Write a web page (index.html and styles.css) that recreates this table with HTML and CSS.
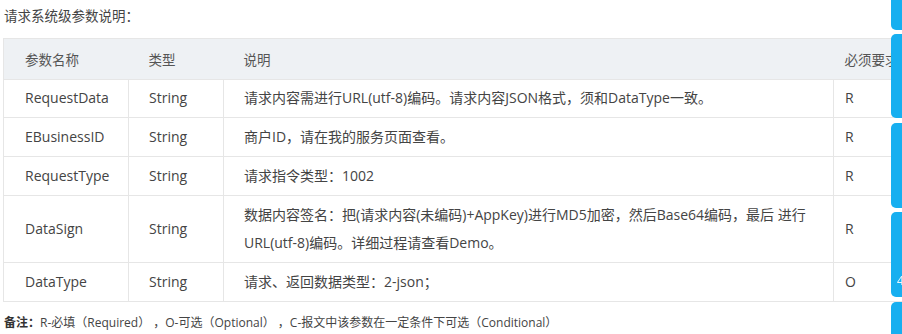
FILE: index.html
```html
<!DOCTYPE html>
<html lang="zh-CN">
<head>
<meta charset="utf-8">
<title>请求系统级参数说明</title>
<link rel="stylesheet" href="styles.css">
</head>
<body>
<div class="page">
  <p class="title">请求系统级参数说明：</p>
  <table class="params">
    <colgroup>
      <col class="c1"><col class="c2"><col class="c3"><col class="c4">
    </colgroup>
    <thead>
      <tr><th>参数名称</th><th>类型</th><th>说明</th><th>必须要求</th></tr>
    </thead>
    <tbody>
      <tr><td>RequestData</td><td>String</td><td>请求内容需进行URL(utf-8)编码。请求内容JSON格式，须和DataType一致。</td><td>R</td></tr>
      <tr><td>EBusinessID</td><td>String</td><td>商户ID，请在我的服务页面查看。</td><td>R</td></tr>
      <tr><td>RequestType</td><td>String</td><td>请求指令类型：1002</td><td>R</td></tr>
      <tr><td>DataSign</td><td>String</td><td>数据内容签名：把(请求内容(未编码)+AppKey)进行MD5加密，然后Base64编码，最后 进行URL(utf-8)编码。详细过程请查看Demo。</td><td>R</td></tr>
      <tr><td>DataType</td><td>String</td><td>请求、返回数据类型：2-json；</td><td>O</td></tr>
    </tbody>
  </table>
  <p class="note"><b>备注：</b>R-必填（Required）&nbsp;，O-可选（Optional）&nbsp;，C-报文中该参数在一定条件下可选（Conditional）</p>
</div>
<div class="sidebar">
  <span class="tab t1"></span>
  <span class="tab t2"></span>
  <span class="tab t3"></span>
  <span class="tab t4">4</span>
  <span class="tab t5"></span>
</div>
</body>
</html>
```
FILE: styles.css
```css
html, body {
  margin: 0;
  padding: 0;
  overflow: hidden;
  background: #fff;
}
body {
  font-family: "Open Sans", "Noto Sans CJK SC", sans-serif;
  color: #333;
}
.page {
  padding: 0 0 0 3px;
  width: 960px;
}
.title {
  margin: 6px 0 12px 1px;
  font-size: 13.5px;
  line-height: 20px;
  color: #444;
}
.params {
  border-collapse: collapse;
  width: 950px;
  border: 1px solid #e6e6e6;
  font-size: 14px;
  table-layout: fixed;
}
.c1 { width: 125px; }
.c2 { width: 95px; }
.c3 { width: 610px; }
.params th {
  background: #eef1f4;
  font-weight: normal;
  text-align: left;
  color: #555;
  height: 40px;
  padding: 0 20px;
  font-size: 13.5px;
  border-bottom: 1px solid #e6e6e6;
}
.params td {
  border: 1px solid #e6e6e6;
  padding: 5px 20px 5px 20px;
  line-height: 28px;
  color: #444;
  vertical-align: middle;
}
.params tbody tr:first-child td { padding-top: 4px; }
.params td:first-child, .params th:first-child { padding-left: 21px; }
.params td:nth-child(4), .params th:nth-child(4) { padding-left: 11px; }
.note {
  margin: 11px 0 0 1px;
  font-size: 12px;
  line-height: 20px;
  color: #444;
}
.note b { color: #333; }
.sidebar {
  position: fixed;
  top: 0;
  right: 0;
  width: 11px;
  height: 334px;
}
.tab {
  position: absolute;
  left: 0;
  width: 11px;
  background: #17aff0;
  border-radius: 5px 0 0 5px;
  color: #e8f7ff;
  font-size: 12px;
  line-height: 14px;
  text-indent: 6px;
  overflow: hidden;
}
.t1 { top: -6px; height: 36px; }
.t2 { top: 34px; height: 84px; }
.t3 { top: 123px; height: 85px; }
.t4 { top: 212px; height: 85px; padding-top: 62px; box-sizing: border-box; }
.t5 { top: 302px; height: 40px; }
```
